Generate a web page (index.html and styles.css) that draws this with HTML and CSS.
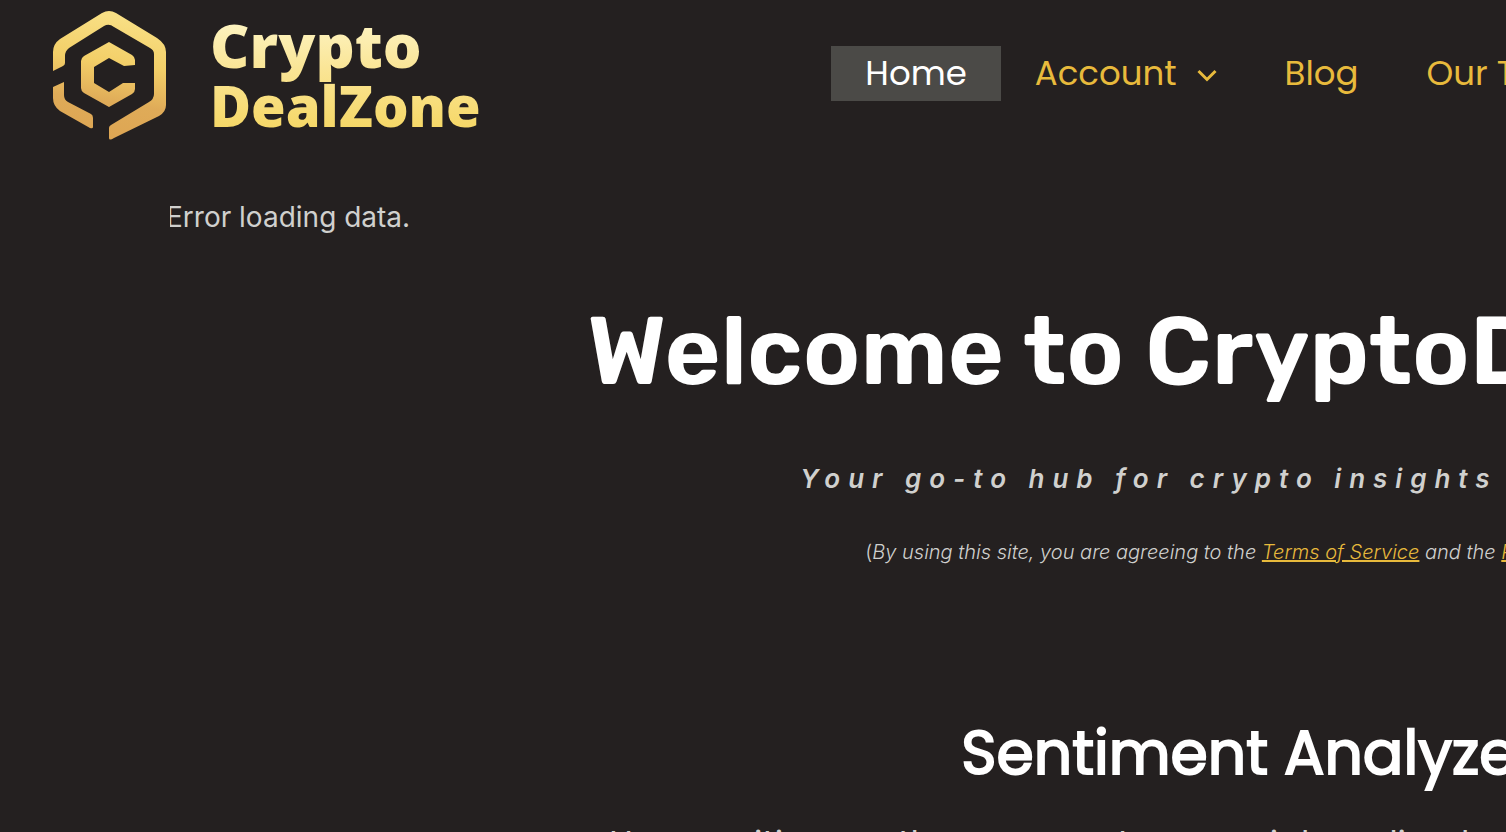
FILE: index.html
```
<!DOCTYPE html>
<html lang="en">
<head>
    <meta charset="UTF-8">
    <meta name="viewport" content="width=device-width, initial-scale=1.0">
    <title>CryptoDealZone</title>
    <link rel="stylesheet" href="styles.css">
</head>
<body>

    <header class="header">
        <a class="logo" href="#">
            <svg class="logo-icon" viewBox="0 0 114 130" aria-hidden="true">
                <defs>
                    <linearGradient id="gold" x1="20" y1="0" x2="0" y2="130" gradientUnits="userSpaceOnUse">
                        <stop offset="0" stop-color="#f8df84"/>
                        <stop offset="0.35" stop-color="#f3cf68"/>
                        <stop offset="0.65" stop-color="#dfab58"/>
                        <stop offset="1" stop-color="#dda452"/>
                    </linearGradient>
                </defs>
                <g fill="url(#gold)">
                    <path d="M1 61V42Q1 34 8 29L50 3Q57 -1 64 3L105 28Q114 34 114 42V95Q114 102 107 106L62 128Q57 131 57 128V118Q57 116 59 115L97 92Q102 89 102 84V44Q102 40 98 38L62 17Q57 13 52 16L17 38Q13 41 13 46V53Q13 55 11 56Z"/>
                    <path d="M1 77L12 72V85Q12 90 16 92L39 104Q41 105 41 108V117Q41 119 38 118L8 101Q1 96 1 88Z"/>
                    <path d="M57 32L80 45Q83 47 83 50V55L72 56L57 48L42 57V73L57 82L71 73H83V79Q83 82 80 84L57 97L32 83Q29 81 29 78V51Q29 48 32 46Z"/>
                </g>
            </svg>
            <span class="logo-text">
                <span class="logo-top">Crypto</span>
                <span class="logo-bottom">DealZone</span>
            </span>
        </a>
        <nav class="nav">
            <a class="nav-link active" href="#">Home</a>
            <a class="nav-link" href="#">Account
                <svg class="chevron" viewBox="0 0 20 13" aria-hidden="true"><path d="M1.500 2L10 10.500L18.500 2" fill="none" stroke="currentColor" stroke-width="3"/></svg>
            </a>
            <a class="nav-link" href="#">Blog</a>
            <a class="nav-link" href="#">Our Tools</a>
        </nav>
    </header>

    <div class="ticker">Error loading data.</div>

    <main class="content">
        <h1 class="title">Welcome to CryptoDealZone</h1>
        <p class="tagline">Your go-to hub for crypto insights and deals</p>
        <p class="terms">(<em>By using this site, you are agreeing to the <a href="#">Terms of Service</a> and the <a href="#">Privacy Policy</a></em>)</p>

        <h2 class="section-title">Sentiment Analyzer</h2>
        <p class="section-text">How positive are the comments on social media about crypto?</p>
    </main>

</body>
</html>
```
FILE: styles.css
```
body {
    margin: 0;
    min-height: 100vh;
    background-color: #242020;
    color: #d0d0ce;
    font-family: "Inter", sans-serif;
    overflow: hidden;
}

a {
    color: #e8ba3c;
}

/* Header */
.header {
    display: flex;
    justify-content: space-between;
    padding: 10px 0 0 52px;
    white-space: nowrap;
}

.logo {
    display: flex;
    flex-shrink: 0;
    gap: 44px;
    text-decoration: none;
}

.logo-icon {
    width: 114px;
    height: 130px;
}

.logo-text {
    display: flex;
    flex-direction: column;
    padding-top: 5px;
    font-family: "Open Sans", sans-serif;
    font-weight: 800;
    line-height: 60px;
    color: transparent;
    background: linear-gradient(#fdf3c0 10%, #fae596 45%, #f6d868 90%);
    -webkit-background-clip: text;
    background-clip: text;
}

.logo-top {
    font-size: 61px;
}

.logo-bottom {
    font-size: 56px;
}

/* Menu */
.nav {
    display: flex;
    align-items: flex-start;
    width: 46.4%;
    padding-top: 36px;
}

.nav-link {
    display: flex;
    flex-shrink: 0;
    align-items: center;
    padding: 0 34px;
    font-family: "Poppins", sans-serif;
    font-size: 34px;
    line-height: 55px;
    text-decoration: none;
}

.nav-link.active {
    background-color: #4b4a47;
    color: #fff;
}

.chevron {
    width: 20px;
    height: 13px;
    margin: 3px 0 0 20px;
}

/* Price ticker */
.ticker {
    margin: 57px 0 0 170px;
    font-size: 28px;
    line-height: 40px;
    text-indent: -4px;
    overflow: hidden;
}

/* Main content */
.content {
    padding-left: 39%;
    white-space: nowrap;
}

.title {
    margin: 56px 0 0;
    font-family: "Rubik", sans-serif;
    font-size: 96px;
    font-weight: 600;
    line-height: 116px;
    color: #fff;
}

.tagline {
    margin: 50px 0 0 213px;
    font-size: 26px;
    font-style: italic;
    font-weight: 600;
    line-height: 40px;
    letter-spacing: 8px;
}

.terms {
    margin: 38px 0 0 278px;
    font-size: 20px;
    font-weight: 300;
    line-height: 30px;
}

.section-title {
    margin: 146px 0 0 374px;
    font-family: "Poppins", sans-serif;
    font-size: 60px;
    font-weight: 400;
    line-height: 80px;
    -webkit-text-stroke: 2px #fff;
    color: #fff;
}

.section-text {
    margin: 22px 0 0 22px;
    font-family: "Poppins", sans-serif;
    font-size: 34px;
    font-weight: 400;
    line-height: 56px;
}
```
